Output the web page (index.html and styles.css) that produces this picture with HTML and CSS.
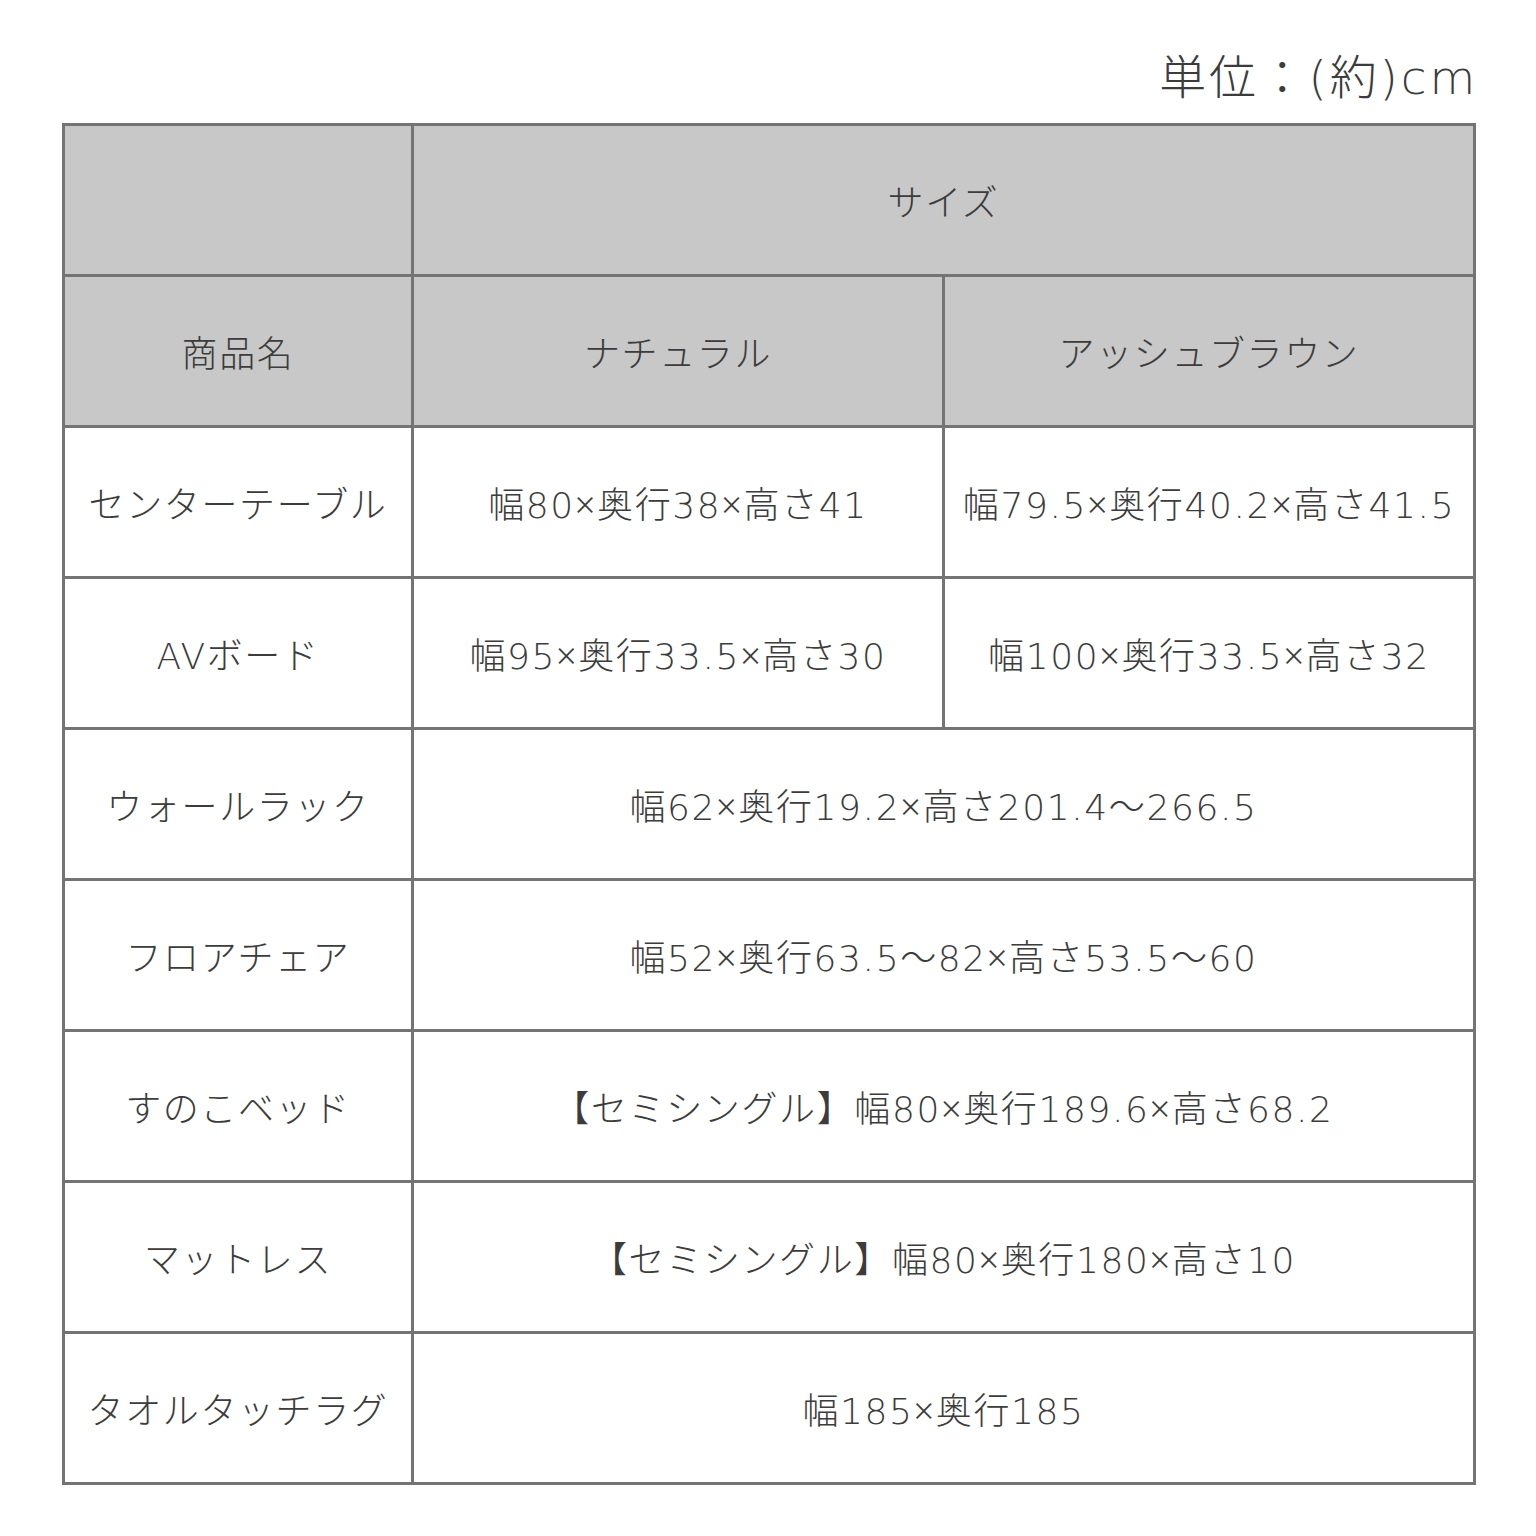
FILE: index.html
```html
<!DOCTYPE html>
<html lang="ja">
<head>
<meta charset="utf-8">
<link rel="stylesheet" href="styles.css">
</head>
<body>
<div class="page">
  <div class="unit">単位：(約)cm</div>
  <table class="spec">
    <colgroup>
      <col class="c1"><col class="c2"><col class="c3">
    </colgroup>
    <tr class="head">
      <td></td>
      <td colspan="2">サイズ</td>
    </tr>
    <tr class="head">
      <td>商品名</td>
      <td>ナチュラル</td>
      <td>アッシュブラウン</td>
    </tr>
    <tr>
      <td>センターテーブル</td>
      <td>幅80<span class="x">×</span>奥行38<span class="x">×</span>高さ41</td>
      <td>幅79.5<span class="x">×</span>奥行40.2<span class="x">×</span>高さ41.5</td>
    </tr>
    <tr>
      <td>AVボード</td>
      <td>幅95<span class="x">×</span>奥行33.5<span class="x">×</span>高さ30</td>
      <td>幅100<span class="x">×</span>奥行33.5<span class="x">×</span>高さ32</td>
    </tr>
    <tr>
      <td>ウォールラック</td>
      <td colspan="2">幅62<span class="x">×</span>奥行19.2<span class="x">×</span>高さ201.4～266.5</td>
    </tr>
    <tr>
      <td>フロアチェア</td>
      <td colspan="2">幅52<span class="x">×</span>奥行63.5～82<span class="x">×</span>高さ53.5～60</td>
    </tr>
    <tr>
      <td>すのこベッド</td>
      <td colspan="2">【セミシングル】幅80<span class="x">×</span>奥行189.6<span class="x">×</span>高さ68.2</td>
    </tr>
    <tr>
      <td>マットレス</td>
      <td colspan="2">【セミシングル】幅80<span class="x">×</span>奥行180<span class="x">×</span>高さ10</td>
    </tr>
    <tr>
      <td>タオルタッチラグ</td>
      <td colspan="2">幅185<span class="x">×</span>奥行185</td>
    </tr>
  </table>
</div>
</body>
</html>
```

FILE: styles.css
```css
html, body {
  margin: 0;
  padding: 0;
  background: #ffffff;
}
body {
  font-family: "DejaVu Sans", "Noto Sans CJK JP", sans-serif;
  color: #3c3c3c;
}
.page {
  width: 1536px;
  height: 1536px;
  box-sizing: border-box;
  padding: 48px 62px 0 62px;
}
.unit {
  text-align: right;
  font-size: 47px;
  font-weight: 200;
  line-height: 60px;
  height: 75px;
  letter-spacing: 0.06em;
  color: #3c3c3c;
  margin-right: -4px;
}
.spec {
  border-collapse: collapse;
  table-layout: fixed;
  width: 1412px;
}
.c1 { width: 349px; }
.c2 { width: 531px; }
.c3 { width: 531px; }
.spec td {
  border: 3px solid #747474;
  height: 148px;
  padding: 0;
  text-align: center;
  vertical-align: middle;
  font-size: 36px;
  font-weight: 200;
  letter-spacing: 0.045em;
  white-space: nowrap;
  color: #3c3c3c;
}
.head td {
  background: #c8c8c8;
}
.x {
  font-family: "Noto Sans", sans-serif;
  font-weight: 300;
}
```
